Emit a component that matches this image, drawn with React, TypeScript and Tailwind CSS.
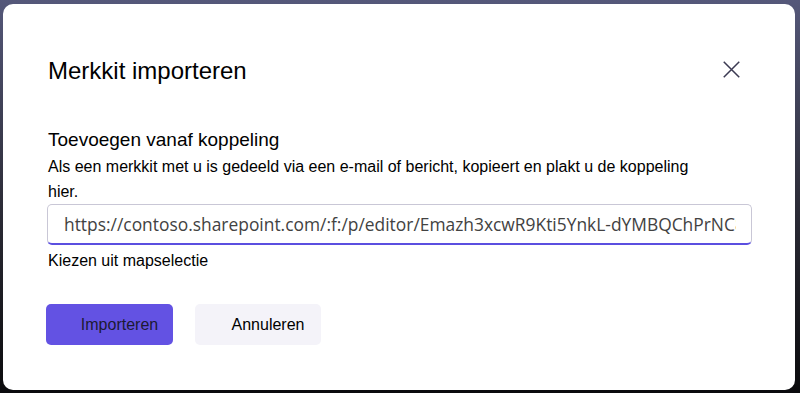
export default function App() {
  return (
    <div className="w-[800px] h-[393px] overflow-hidden bg-gradient-to-b from-[#55587a] via-[#2e2e3a] to-[#0b0b0d] pl-[3px] pt-[4px] pr-[5px] pb-[4px]">
      {/* Dialog */}
      <div className="h-[386px] w-[792px] rounded-[10px] bg-white pl-[45px] pr-[55px] pt-[51px] font-['Liberation_Sans',Arial,sans-serif] text-black">
        {/* Header */}
        <div className="flex items-start justify-between">
          <h1 className="text-[24px] leading-[32px]">Merkkit importeren</h1>
          <button className="mt-[6px] flex h-[17px] w-[17px] items-center justify-center text-[#3b3a52]">
            <svg width="17" height="17" viewBox="0 0 17 17" fill="none" stroke="currentColor" strokeWidth="1.5">
              <path d="M0.75 0.75 L16.25 16.25 M16.25 0.75 L0.75 16.25" />
            </svg>
          </button>
        </div>

        {/* Link section */}
        <div className="mt-[40px]">
          <h2 className="text-[19px] leading-[26px]">Toevoegen vanaf koppeling</h2>
          <p className="mt-[1px] w-[660px] text-[16px] leading-[25px]">
            Als een merkkit met u is gedeeld via een e-mail of bericht, kopieert en plakt u de koppeling hier.
          </p>
        </div>

        <div className="-ml-[1px] h-[41px] w-[705px] overflow-hidden rounded-[5px] border border-[#c9c7d6] border-b-2 border-b-[#5b4fe0] pl-[16px]">
          <input
            readOnly
            value="https://contoso.sharepoint.com/:f:/p/editor/Emazh3xcwR9Kti5YnkL-dYMBQChPrNC8xQz"
            className="h-full w-[672px] bg-transparent font-['Open_Sans',sans-serif] text-[17.4px] text-[#424242] outline-none"
          />
        </div>

        <button className="mt-[5px] block text-[16px] leading-[22px]">Kiezen uit mapselectie</button>

        {/* Actions */}
        <div className="-ml-[2px] mt-[32px] flex gap-[22px]">
          <button className="h-[41px] w-[127px] rounded-[5px] bg-[#6352e3] pl-[20px] text-[16px] text-[#1c1a33]">
            Importeren
          </button>
          <button className="h-[41px] w-[126px] rounded-[5px] bg-[#f4f3f9] pl-[20px] text-[16px] text-black">
            Annuleren
          </button>
        </div>
      </div>
    </div>
  );
}
